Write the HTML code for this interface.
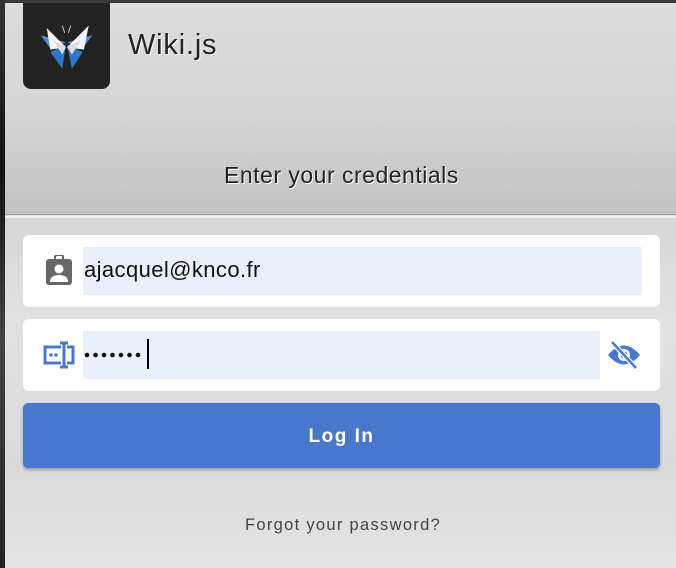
<!DOCTYPE html>
<html><head><meta charset="utf-8"><style>
*{margin:0;padding:0;box-sizing:border-box}
body{width:676px;height:568px;overflow:hidden;position:relative;font-family:"Liberation Sans",sans-serif;background:#dedede}
.left{position:absolute;left:0;top:0;width:5px;height:568px;background:linear-gradient(180deg,#333,#111 30%,#444 60%,#222);}
.top{position:absolute;left:0;top:0;width:676px;height:3px;background:#3a3a3a}
.hdr{position:absolute;left:5px;top:3px;width:671px;height:212px;background:linear-gradient(180deg,#dcdcdc 0%,#d6d6d6 50%,#c2c2c2 100%);border-bottom:1px solid #9e9e9e}
.hdr2{position:absolute;left:5px;top:216px;width:671px;height:2px;background:#f0f0f0}
.main{position:absolute;left:5px;top:218px;width:671px;height:350px;background:linear-gradient(180deg,#d6d6d6,#e2e2e2 30%,#dadada 70%,#e4e4e4)}
.logo{position:absolute;left:23px;top:3px;width:87px;height:86px;background:#222;border-radius:0 0 8px 8px}
.title{position:absolute;left:128px;top:29px;font-size:29px;letter-spacing:0.8px;color:#222;text-shadow:1px 1px 0 #fff}
.cred{position:absolute;left:224px;top:162px;font-size:23px;letter-spacing:0.5px;color:#222;text-shadow:1px 1px 0 #fff}
.box{position:absolute;left:23px;width:637px;height:72px;background:#fff;border-radius:6px}
.inp{position:absolute;left:60px;top:12px;height:48px;background:#e8f0fc}
.btn{position:absolute;left:23px;top:403px;width:637px;height:65px;background:#4878cc;border-radius:5px;box-shadow:0 2px 3px rgba(0,0,0,.3);color:#fff;font-weight:bold;font-size:19px;letter-spacing:1.5px;text-align:center;line-height:68px}
.forgot{position:absolute;left:245px;top:516px;font-size:16.5px;color:#444;letter-spacing:1.3px}
</style></head><body>
<div class="hdr"></div><div class="hdr2"></div><div class="main"></div>
<div class="top"></div><div class="left"></div>
<div class="logo"><svg width="87" height="86" viewBox="0 0 87 86">
<g transform="translate(43.5 43) scale(1.2) translate(-43.5 -43)">
<path d="M43 40 L22 34 L30 45 Z" fill="#4a90d8"/><path d="M44 40 L65 34 L57 45 Z" fill="#4a90d8"/>
<path d="M43 42 L30 48 L40 62 Z" fill="#2f78c8"/><path d="M44 42 L57 48 L48 62 Z" fill="#2f78c8"/>
<path d="M43 44 L27 28 L30 46 Z" fill="#f4f4f4"/><path d="M44 44 L62 26 L58 46 Z" fill="#f4f4f4"/>
<path d="M43 44 L32 38 L40 50 Z" fill="#ddd"/><path d="M44 44 L56 38 L48 50 Z" fill="#ddd"/>
<path d="M42 32 L40 26 M45 32 L47 26" stroke="#ccc" stroke-width="0.8"/>
</g></svg></div>
<div class="title">Wiki.js</div>
<div class="cred">Enter your credentials</div>
<div class="box" style="top:235px">
<svg style="position:absolute;left:21px;top:20px" width="30" height="32" viewBox="0 0 30 32"><rect x="2" y="4" width="26" height="26" rx="3" fill="#666"/><rect x="11" y="0" width="8" height="7" rx="2" fill="none" stroke="#666" stroke-width="2"/><circle cx="15" cy="14" r="4.5" fill="#fff"/><path d="M6 27 q0-7 9-7 q9 0 9 7z" fill="#fff"/></svg>
<div class="inp" style="width:559px"></div>
<div style="position:absolute;left:61px;top:22px;font-size:22px;color:#111;letter-spacing:0.4px">ajacquel@knco.fr</div>
</div>
<div class="box" style="top:319px">
<svg style="position:absolute;left:20px;top:22px" width="32" height="28" viewBox="0 0 32 28"><path d="M18 6 H2 V22 H18 M24 6 H30 V22 H24 M17 2 H25 M17 26 H25 M21 2 V26" stroke="#4878cc" stroke-width="3" fill="none"/><circle cx="8" cy="14" r="1.8" fill="#4878cc"/><circle cx="13" cy="14" r="1.8" fill="#4878cc"/></svg>
<div class="inp" style="width:517px"></div>
<svg style="position:absolute;left:61px;top:32px" width="64" height="8" viewBox="0 0 64 8"><g fill="#111"><circle cx="3" cy="4" r="2.3"/><circle cx="11.5" cy="4" r="2.3"/><circle cx="20" cy="4" r="2.3"/><circle cx="28.5" cy="4" r="2.3"/><circle cx="37" cy="4" r="2.3"/><circle cx="45.5" cy="4" r="2.3"/><circle cx="54" cy="4" r="2.3"/></g></svg>
<div style="position:absolute;left:124px;top:20px;width:2px;height:30px;background:#000"></div>
<svg style="position:absolute;left:584px;top:21px" width="34" height="30" viewBox="0 0 34 30"><path d="M1 15 Q17 -4 33 15 Q17 34 1 15Z" fill="#4878cc"/><circle cx="17" cy="15" r="6" fill="#fff"/><circle cx="17" cy="15" r="3.5" fill="#4878cc"/><path d="M5 2 L29 28" stroke="#fff" stroke-width="5"/><path d="M5 2 L29 28" stroke="#4878cc" stroke-width="2.5"/></svg>
</div>
<div class="btn">Log In</div>
<div class="forgot">Forgot your password?</div>
</body></html>
